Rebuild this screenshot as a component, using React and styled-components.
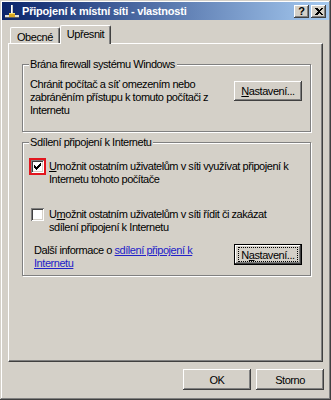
import React from "react";
import styled, { createGlobalStyle } from "styled-components";

const GlobalStyle = createGlobalStyle`
  html, body { margin: 0; padding: 0; background: #d4d0c8; }
  body {
    font-family: "Liberation Sans", Arial, sans-serif;
    font-size: 11px;
    letter-spacing: -0.45px;
    color: #000;
  }
`;

const raised = `
  box-shadow: inset -1px -1px #404040, inset 1px 1px #fff,
    inset -2px -2px #808080, inset 2px 2px #d4d0c8;
`;

const Window = styled.div`
  box-sizing: border-box;
  width: 331px;
  height: 400px;
  padding: 2px;
  background: #d4d0c8;
  box-shadow: inset -1px -1px #404040, inset 1px 1px #d4d0c8,
    inset -2px -2px #808080, inset 2px 2px #fff;
  display: flex;
  flex-direction: column;
`;

const TitleBar = styled.div`
  height: 18px;
  display: flex;
  align-items: center;
  padding: 0 3px 0 2px;
  background: linear-gradient(to right, #0a246a, #a6caf0);
  color: #fff;
  font-weight: bold;
`;

const TitleText = styled.span`
  flex: 1;
  margin-left: 2px;
  letter-spacing: -0.2px;
`;

const CaptionButton = styled.div`
  width: 15px;
  height: 13px;
  margin-left: 2px;
  background: #d4d0c8;
  ${raised}
  display: flex;
  align-items: center;
  justify-content: center;
  color: #000;
  font-size: 11px;
  font-weight: bold;
  line-height: 13px;
  letter-spacing: 0;
`;

const Body = styled.div`
  padding: 6px 6px 0 6px;
  display: flex;
  flex-direction: column;
`;

const TabStrip = styled.div`
  display: flex;
  align-items: flex-end;
  height: 18px;
  padding-left: 2px;
  margin-bottom: -1px;
`;

const Tab = styled.div`
  position: relative;
  z-index: ${(p) => (p.$active ? 2 : 0)};
  box-sizing: border-box;
  height: ${(p) => (p.$active ? "19px" : "16px")};
  padding: ${(p) => (p.$active ? "2px 6px 0" : "3px 6px 0")};
  margin-bottom: ${(p) => (p.$active ? "0" : "1px")};
  background: #d4d0c8;
  border-top: 1px solid #fff;
  border-left: 1px solid #fff;
  border-right: 1px solid #404040;
  border-radius: 2px 2px 0 0;
  box-shadow: inset -1px 0 #808080;
  line-height: 13px;
`;

const Panel = styled.div`
  position: relative;
  z-index: 1;
  box-sizing: border-box;
  height: 319px;
  border: 1px solid;
  border-color: #fff #404040 #404040 #fff;
  box-shadow: inset -1px -1px #808080;
  padding: 20px 11px 0 13px;
  display: flex;
  flex-direction: column;
`;

const Group = styled.div`
  position: relative;
  box-sizing: border-box;
  height: ${(p) => p.$height}px;
  margin-top: ${(p) => p.$top || 0}px;
  border: 1px solid #808080;
  box-shadow: inset 1px 1px #fff, 1px 1px #fff;
  padding: ${(p) => p.$pad};
`;

const Legend = styled.span`
  position: absolute;
  top: -7px;
  left: 6px;
  padding: 0 2px 0 1px;
  background: #d4d0c8;
  line-height: 13px;
  white-space: nowrap;
`;

const Row = styled.div`
  display: flex;
  justify-content: space-between;
  align-items: flex-start;
  margin-top: ${(p) => p.$top || 0}px;
  padding-left: ${(p) => p.$indent || 0}px;
`;

const Text = styled.div`
  line-height: 13px;
  white-space: nowrap;
`;

const Button = styled.button`
  box-sizing: border-box;
  width: 68px;
  height: ${(p) => p.$h || 20}px;
  margin-top: ${(p) => p.$top || 0}px;
  padding: 0;
  border: ${(p) => (p.$default ? "1px solid #000" : "none")};
  background: #d4d0c8;
  ${raised}
  font: inherit;
  letter-spacing: inherit;
  color: #000;
  display: flex;
  align-items: center;
  justify-content: center;
`;

const FocusRing = styled.span`
  box-sizing: border-box;
  display: flex;
  align-items: center;
  justify-content: center;
  width: 58px;
  height: 13px;
  outline: 1px dotted #000;
`;

const CheckRow = styled.div`
  display: flex;
  align-items: flex-start;
  gap: 5px;
  margin-top: ${(p) => p.$top || 0}px;
`;

const CheckBox = styled.span`
  flex: none;
  box-sizing: border-box;
  width: 13px;
  height: 13px;
  background: #fff;
  box-shadow: inset 1px 1px #808080, inset -1px -1px #fff,
    inset 2px 2px #404040, inset -2px -2px #d4d0c8;
  outline: ${(p) => (p.$marked ? "2px solid #e2161e" : "none")};
  display: flex;
  align-items: center;
  justify-content: center;
`;

const Link = styled.a`
  color: #2121c9;
  text-decoration: underline;
`;

const Footer = styled.div`
  display: flex;
  justify-content: flex-end;
  gap: 5px;
  margin: 7px -1px 0 0;
`;

const NetIcon = () => (
  <svg width="16" height="16" viewBox="0 0 16 16" shapeRendering="crispEdges">
    <rect x="7" y="2" width="2" height="9" fill="#c8c8c8" />
    <rect x="7" y="2" width="1" height="9" fill="#fff" />
    <rect x="1" y="12" width="14" height="2" fill="#e0e0e0" />
    <rect x="1" y="14" width="14" height="1" fill="#606060" />
    <rect x="5" y="10" width="6" height="4" fill="#d8a820" />
    <rect x="5" y="10" width="6" height="1" fill="#f8e070" />
  </svg>
);

const CloseGlyph = () => (
  <svg width="8" height="7" viewBox="0 0 8 7" shapeRendering="crispEdges">
    <path d="M0 0h2l2 2l2-2h2l-3 3.5l3 3.5h-2l-2-2l-2 2h-2l3-3.5z" fill="#000" />
  </svg>
);

const CheckMark = () => (
  <svg width="7" height="7" viewBox="0 0 7 7" shapeRendering="crispEdges">
    <path d="M0 2h1v1h1v1h1v-1h1v-1h1v-1h1v-1h1v3h-1v1h-1v1h-1v1h-1v1h-1v-1h-1v-1h-1z" fill="#000" />
  </svg>
);

export default function App() {
  return (
    <>
      <GlobalStyle />
      <Window>
        <TitleBar>
          <NetIcon />
          <TitleText>Připojení k místní síti - vlastnosti</TitleText>
          <CaptionButton>?</CaptionButton>
          <CaptionButton>
            <CloseGlyph />
          </CaptionButton>
        </TitleBar>
        <Body>
          <TabStrip>
            <Tab>Obecné</Tab>
            <Tab $active>Upřesnit</Tab>
          </TabStrip>
          <Panel>
            <Group $height={68} $pad="13px 8px 0 7px">
              <Legend>Brána firewall systému Windows</Legend>
              <Row>
                <Text>
                  Chránit počítač a síť omezením nebo
                  <br />
                  zabráněním přístupu k tomuto počítači z
                  <br />
                  Internetu
                </Text>
                <Button $top={3}>
                  <span>
                    <u>N</u>astavení...
                  </span>
                </Button>
              </Row>
            </Group>
            <Group $height={134} $top={10} $pad="17px 8px 0 8px">
              <Legend>Sdílení připojení k Internetu</Legend>
              <CheckRow>
                <CheckBox $marked>
                  <CheckMark />
                </CheckBox>
                <Text>
                  <u>U</u>možnit ostatním uživatelům v síti využívat připojení k
                  <br />
                  Internetu tohoto počítače
                </Text>
              </CheckRow>
              <CheckRow $top={22}>
                <CheckBox />
                <Text>
                  U<u>m</u>ožnit ostatním uživatelům v síti řídit či zakázat
                  <br />
                  sdílení připojení k Internetu
                </Text>
              </CheckRow>
              <Row $top={10} $indent={3}>
                <Text>
                  Další informace o <Link href="#">sdílení připojení k</Link>
                  <br />
                  <Link href="#">Internetu</Link>
                </Text>
                <Button $default $h={21}>
                  <FocusRing>
                    <span>
                      N<u>a</u>stavení...
                    </span>
                  </FocusRing>
                </Button>
              </Row>
            </Group>
          </Panel>
          <Footer>
            <Button $h={21}>OK</Button>
            <Button $h={21}>Storno</Button>
          </Footer>
        </Body>
      </Window>
    </>
  );
}
